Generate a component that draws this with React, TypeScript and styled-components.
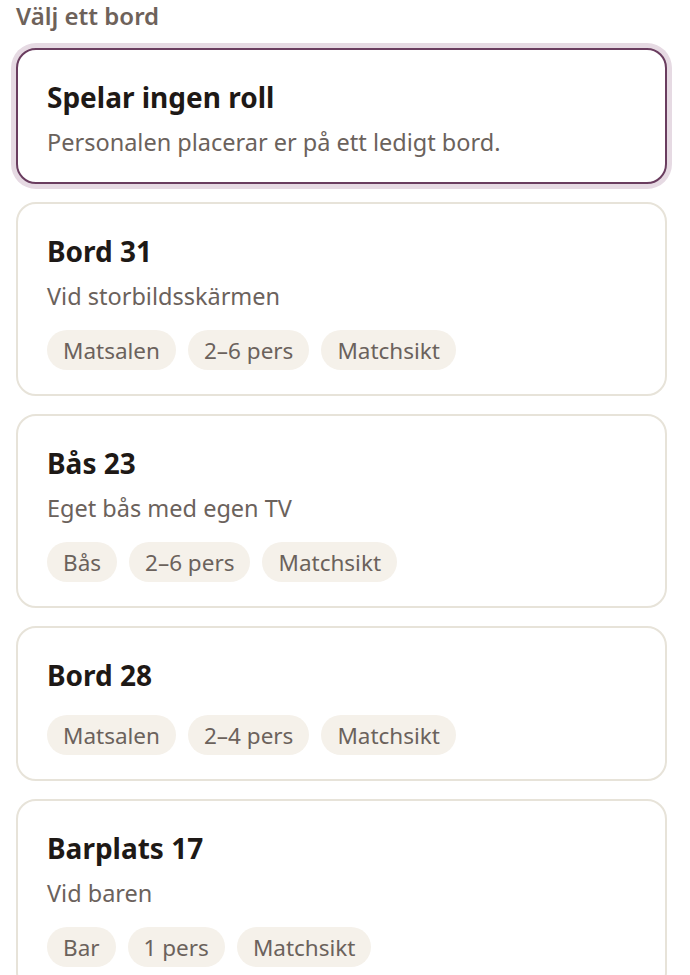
import styled, { createGlobalStyle } from "styled-components";

const GlobalStyle = createGlobalStyle`
  body {
    margin: 0;
    background: #ffffff;
    font-family: "Noto Sans", "Open Sans", sans-serif;
  }
`;

const Page = styled.div`
  padding: 1px 23px 0 16px;
  display: flex;
  flex-flow: column;
`;

const Heading = styled.h2`
  margin: 0 0 17px;
  font-size: 24px;
  line-height: 30px;
  font-weight: 600;
  color: #6e625a;
`;

const List = styled.div`
  display: flex;
  flex-flow: column;
  gap: 18px;
`;

const Card = styled.button<{ $selected?: boolean }>`
  display: flex;
  flex-flow: column;
  align-items: flex-start;
  text-align: left;
  width: 100%;
  padding: 30px 29px 24px;
  background: #ffffff;
  border: 2px solid ${({ $selected }) => ($selected ? "#6a3d5f" : "#e7e3d9")};
  border-radius: 20px;
  box-shadow: ${({ $selected }) => ($selected ? "0 0 0 5px #e6dae3" : "none")};
  font-family: inherit;
  cursor: pointer;
`;

const Title = styled.div`
  font-size: 28px;
  line-height: 34px;
  font-weight: 700;
  color: #1e1916;
`;

const Desc = styled.div`
  margin-top: 12px;
  font-size: 23.5px;
  line-height: 32px;
  color: #6b625c;
`;

const Chips = styled.div<{ $tight?: boolean }>`
  display: flex;
  gap: 12px;
  margin-top: ${({ $tight }) => ($tight ? "18px" : "23px")};
`;

const Chip = styled.span`
  display: inline-flex;
  align-items: center;
  height: 40px;
  padding: 0 16px;
  border-radius: 20px;
  background: #f5f1ea;
  color: #6b625c;
  font-size: 22.5px;
`;

type Table = {
  title: string;
  desc?: string;
  tags?: string[];
  selected?: boolean;
};

const tables: Table[] = [
  {
    title: "Spelar ingen roll",
    desc: "Personalen placerar er på ett ledigt bord.",
    selected: true,
  },
  {
    title: "Bord 31",
    desc: "Vid storbildsskärmen",
    tags: ["Matsalen", "2–6 pers", "Matchsikt"],
  },
  {
    title: "Bås 23",
    desc: "Eget bås med egen TV",
    tags: ["Bås", "2–6 pers", "Matchsikt"],
  },
  {
    title: "Bord 28",
    tags: ["Matsalen", "2–4 pers", "Matchsikt"],
  },
  {
    title: "Barplats 17",
    desc: "Vid baren",
    tags: ["Bar", "1 pers", "Matchsikt"],
  },
];

export default function App() {
  return (
    <>
      <GlobalStyle />
      <Page>
        <Heading>Välj ett bord</Heading>
        <List>
          {tables.map((t) => (
            <Card key={t.title} $selected={t.selected}>
              <Title>{t.title}</Title>
              {t.desc && <Desc>{t.desc}</Desc>}
              {t.tags && (
                <Chips $tight={!!t.desc}>
                  {t.tags.map((tag) => (
                    <Chip key={tag}>{tag}</Chip>
                  ))}
                </Chips>
              )}
            </Card>
          ))}
        </List>
      </Page>
    </>
  );
}
